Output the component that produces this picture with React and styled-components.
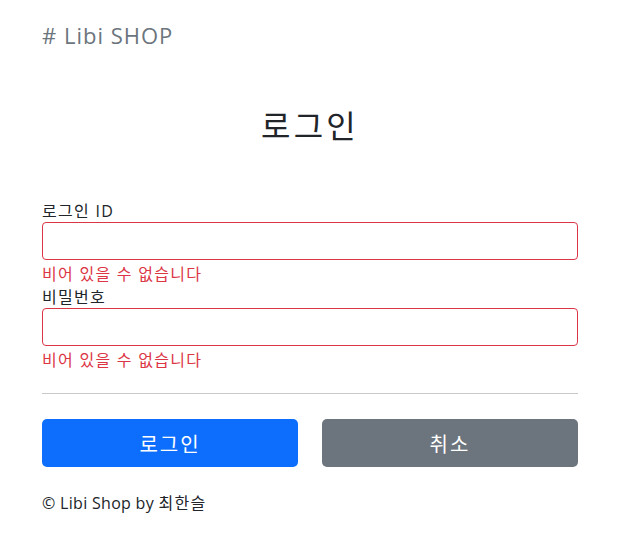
import React from "react";
import styled, { createGlobalStyle } from "styled-components";

const GlobalStyle = createGlobalStyle`
  * { box-sizing: border-box; }
  body {
    margin: 0;
    background: #fff;
    color: #212529;
    font-family: "Open Sans", "Noto Sans CJK KR", sans-serif;
  }
`;

const Page = styled.div`
  width: 621px;
  padding: 19px 43px 30px 42px;
`;

const Brand = styled.div`
  font-size: 22px;
  line-height: 32px;
  letter-spacing: 1px;
  color: #6c757d;
`;

const Title = styled.h2`
  margin: 56px 0 0;
  font-size: 32px;
  font-weight: 400;
  letter-spacing: 0.1em;
  line-height: 38px;
  text-align: center;
`;

const Form = styled.form`
  margin-top: 55px;
  display: flex;
  flex-direction: column;
`;

const Label = styled.label`
  font-size: 16px;
  line-height: 22px;
  letter-spacing: 0.08em;
`;

const Input = styled.input`
  height: 38px;
  width: 100%;
  border: 1px solid #dc3545;
  border-radius: 4px;
  padding: 6px 12px;
  font-size: 16px;
  outline: none;
`;

const Error = styled.div`
  margin-top: 2px;
  font-size: 16px;
  line-height: 24px;
  letter-spacing: 0.08em;
  color: #dc3545;
`;

const Divider = styled.hr`
  margin: 21px 0 25px;
  border: 0;
  border-top: 1px solid #c8c8c8;
`;

const Buttons = styled.div`
  display: grid;
  grid-template-columns: 1fr 1fr;
  gap: 24px;
`;

const Button = styled.button`
  height: 48px;
  border: 0;
  border-radius: 5px;
  background: ${(p) => (p.$variant === "secondary" ? "#6c757d" : "#0d6efd")};
  color: #fff;
  font-family: inherit;
  font-size: 20px;
  letter-spacing: 0.1em;
`;

const Footer = styled.footer`
  margin-top: 25px;
  font-size: 16px;
  line-height: 22px;
  letter-spacing: 0.3px;
`;

const Author = styled.span`
  letter-spacing: 0.08em;
`;

export default function App() {
  return (
    <>
      <GlobalStyle />
      <Page>
        <Brand># Libi SHOP</Brand>
        <Title>로그인</Title>
        <Form onSubmit={(e) => e.preventDefault()}>
          <Label>로그인 ID</Label>
          <Input type="text" />
          <Error>비어 있을 수 없습니다</Error>
          <Label>비밀번호</Label>
          <Input type="password" />
          <Error>비어 있을 수 없습니다</Error>
          <Divider />
          <Buttons>
            <Button type="submit">로그인</Button>
            <Button type="button" $variant="secondary">
              취소
            </Button>
          </Buttons>
        </Form>
        <Footer>
          © Libi Shop by <Author>최한슬</Author>
        </Footer>
      </Page>
    </>
  );
}
